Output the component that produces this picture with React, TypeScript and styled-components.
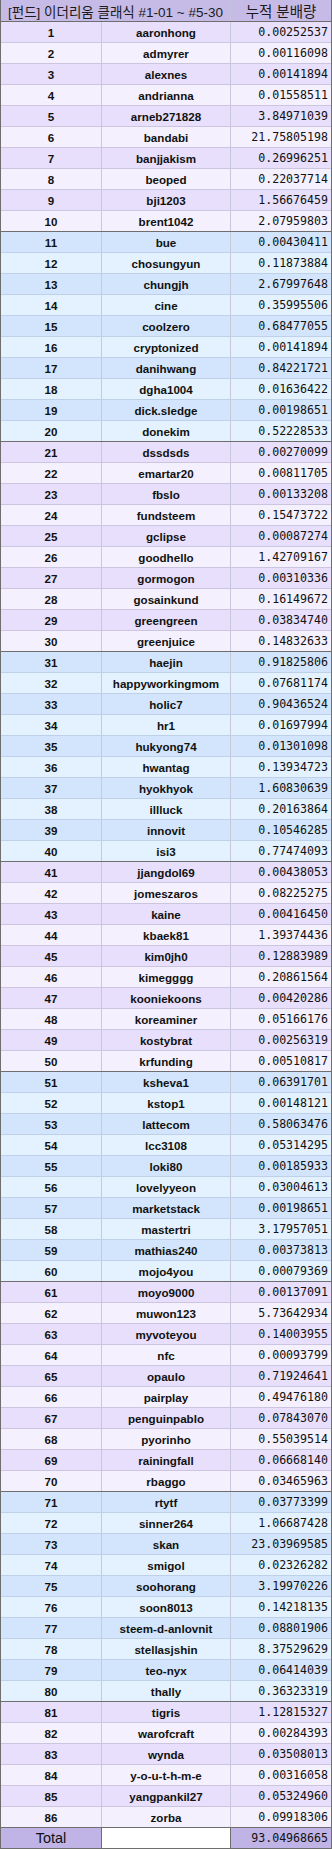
import React from "react";
import styled, { createGlobalStyle } from "styled-components";

const GlobalStyle = createGlobalStyle`
  html, body { margin: 0; padding: 0; background: #ffffff; }
  body { font-family: "Liberation Sans", "Noto Sans CJK KR", sans-serif; }
`;

const raw = `aaronhong 0.00252537
admyrer 0.00116098
alexnes 0.00141894
andrianna 0.01558511
arneb271828 3.84971039
bandabi 21.75805198
banjjakism 0.26996251
beoped 0.22037714
bji1203 1.56676459
brent1042 2.07959803
bue 0.00430411
chosungyun 0.11873884
chungjh 2.67997648
cine 0.35995506
coolzero 0.68477055
cryptonized 0.00141894
danihwang 0.84221721
dgha1004 0.01636422
dick.sledge 0.00198651
donekim 0.52228533
dssdsds 0.00270099
emartar20 0.00811705
fbslo 0.00133208
fundsteem 0.15473722
gclipse 0.00087274
goodhello 1.42709167
gormogon 0.00310336
gosainkund 0.16149672
greengreen 0.03834740
greenjuice 0.14832633
haejin 0.91825806
happyworkingmom 0.07681174
holic7 0.90436524
hr1 0.01697994
hukyong74 0.01301098
hwantag 0.13934723
hyokhyok 1.60830639
illluck 0.20163864
innovit 0.10546285
isi3 0.77474093
jjangdol69 0.00438053
jomeszaros 0.08225275
kaine 0.00416450
kbaek81 1.39374436
kim0jh0 0.12883989
kimegggg 0.20861564
kooniekoons 0.00420286
koreaminer 0.05166176
kostybrat 0.00256319
krfunding 0.00510817
ksheva1 0.06391701
kstop1 0.00148121
lattecom 0.58063476
lcc3108 0.05314295
loki80 0.00185933
lovelyyeon 0.03004613
marketstack 0.00198651
mastertri 3.17957051
mathias240 0.00373813
mojo4you 0.00079369
moyo9000 0.00137091
muwon123 5.73642934
myvoteyou 0.14003955
nfc 0.00093799
opaulo 0.71924641
pairplay 0.49476180
penguinpablo 0.07843070
pyorinho 0.55039514
rainingfall 0.06668140
rbaggo 0.03465963
rtytf 0.03773399
sinner264 1.06687428
skan 23.03969585
smigol 0.02326282
soohorang 3.19970226
soon8013 0.14218135
steem-d-anlovnit 0.08801906
stellasjshin 8.37529629
teo-nyx 0.06414039
thally 0.36323319
tigris 1.12815327
warofcraft 0.00284393
wynda 0.03508013
y-o-u-t-h-m-e 0.00316058
yangpankil27 0.05324960
zorba 0.09918306`;

const rows = raw.split("\n").map((line, i) => {
  const [name, value] = line.trim().split(" ");
  return { no: i + 1, name, value };
});

const palette = {
  purple: ["#e7dffb", "#f4f0fd"],
  blue: ["#d2e5fc", "#e3f2fe"],
};

const Sheet = styled.div`
  width: 332px;
  box-sizing: border-box;
  border-left: 1px solid #6e6e6e;
  border-right: 1px solid #6e6e6e;
  display: flex;
  flex-direction: column;
`;

const Grid = styled.div`
  display: grid;
  grid-template-columns: 101px 129px 100px;
`;

const HeaderRow = styled(Grid)`
  height: 22px;
  box-sizing: border-box;
  background: #c6bae7;
  border-bottom: 1px solid #6e6e6e;
`;

const HeaderCell = styled.div<{ $span?: number; $size: number }>`
  grid-column: span ${(p) => p.$span ?? 1};
  display: flex;
  align-items: center;
  justify-content: center;
  font-family: "Liberation Sans", "Noto Sans CJK KR", sans-serif;
  font-size: ${(p) => p.$size}px;
  color: #1a1a1a;
  border-right: 1px solid #c4c4d8;
  white-space: nowrap;
  &:last-child { border-right: none; }
`;

const DataRow = styled(Grid)<{ $bg: string; $last: boolean; $line: string }>`
  height: 21px;
  box-sizing: border-box;
  background: ${(p) => p.$bg};
  border-bottom: 1px solid ${(p) => (p.$last ? "#6e6e6e" : p.$line)};
`;

const Cell = styled.div<{ $align?: "center" | "right"; $mono?: boolean }>`
  display: flex;
  align-items: center;
  justify-content: ${(p) => (p.$align === "right" ? "flex-end" : "center")};
  padding-right: ${(p) => (p.$align === "right" ? "3px" : "0")};
  border-right: 1px solid #c8c8dc;
  font-family: ${(p) =>
    p.$mono ? `"DejaVu Sans Mono", "Liberation Mono", monospace` : `"Liberation Sans", Arial, sans-serif`};
  font-size: 11.6px;
  font-weight: ${(p) => (p.$mono ? 400 : 700)};
  color: #111;
  white-space: nowrap;
  overflow: hidden;
  &:last-child { border-right: none; }
`;

const TotalRow = styled(Grid)`
  height: 21px;
  box-sizing: border-box;
  border-bottom: 1px solid #6e6e6e;
`;

const TotalCell = styled.div<{ $fill: boolean; $align?: "center" | "right"; $mono?: boolean }>`
  display: flex;
  align-items: center;
  justify-content: ${(p) => (p.$align === "right" ? "flex-end" : "center")};
  padding-right: ${(p) => (p.$align === "right" ? "3px" : "0")};
  background: ${(p) => (p.$fill ? "#c0b4e6" : "#ffffff")};
  border-right: 1px solid #6e6e6e;
  font-family: ${(p) =>
    p.$mono ? `"DejaVu Sans Mono", "Liberation Mono", monospace` : `"Liberation Sans", Arial, sans-serif`};
  font-size: ${(p) => (p.$mono ? "11.6px" : "14.5px")};
  color: #111;
  &:last-child { border-right: none; }
`;

export default function App() {
  return (
    <>
      <GlobalStyle />
      <Sheet>
        <HeaderRow>
          <HeaderCell $span={2} $size={13.5}>
            [펀드] 이더리움 클래식 #1-01 ~ #5-30
          </HeaderCell>
          <HeaderCell $size={14.5}>누적 분배량</HeaderCell>
        </HeaderRow>
        {rows.map((r, i) => {
          const group = Math.floor(i / 10);
          const tone = group % 2 === 0 ? "purple" : "blue";
          const bg = palette[tone][i % 2];
          const last = (i + 1) % 10 === 0 || i === rows.length - 1;
          const line = tone === "purple" ? "#ccc5e0" : "#bed1e8";
          return (
            <DataRow key={r.no} $bg={bg} $last={last} $line={line}>
              <Cell>{r.no}</Cell>
              <Cell>{r.name}</Cell>
              <Cell $align="right" $mono>
                {r.value}
              </Cell>
            </DataRow>
          );
        })}
        <TotalRow>
          <TotalCell $fill>Total</TotalCell>
          <TotalCell $fill={false}></TotalCell>
          <TotalCell $fill $align="right" $mono>
            93.04968665
          </TotalCell>
        </TotalRow>
      </Sheet>
    </>
  );
}
